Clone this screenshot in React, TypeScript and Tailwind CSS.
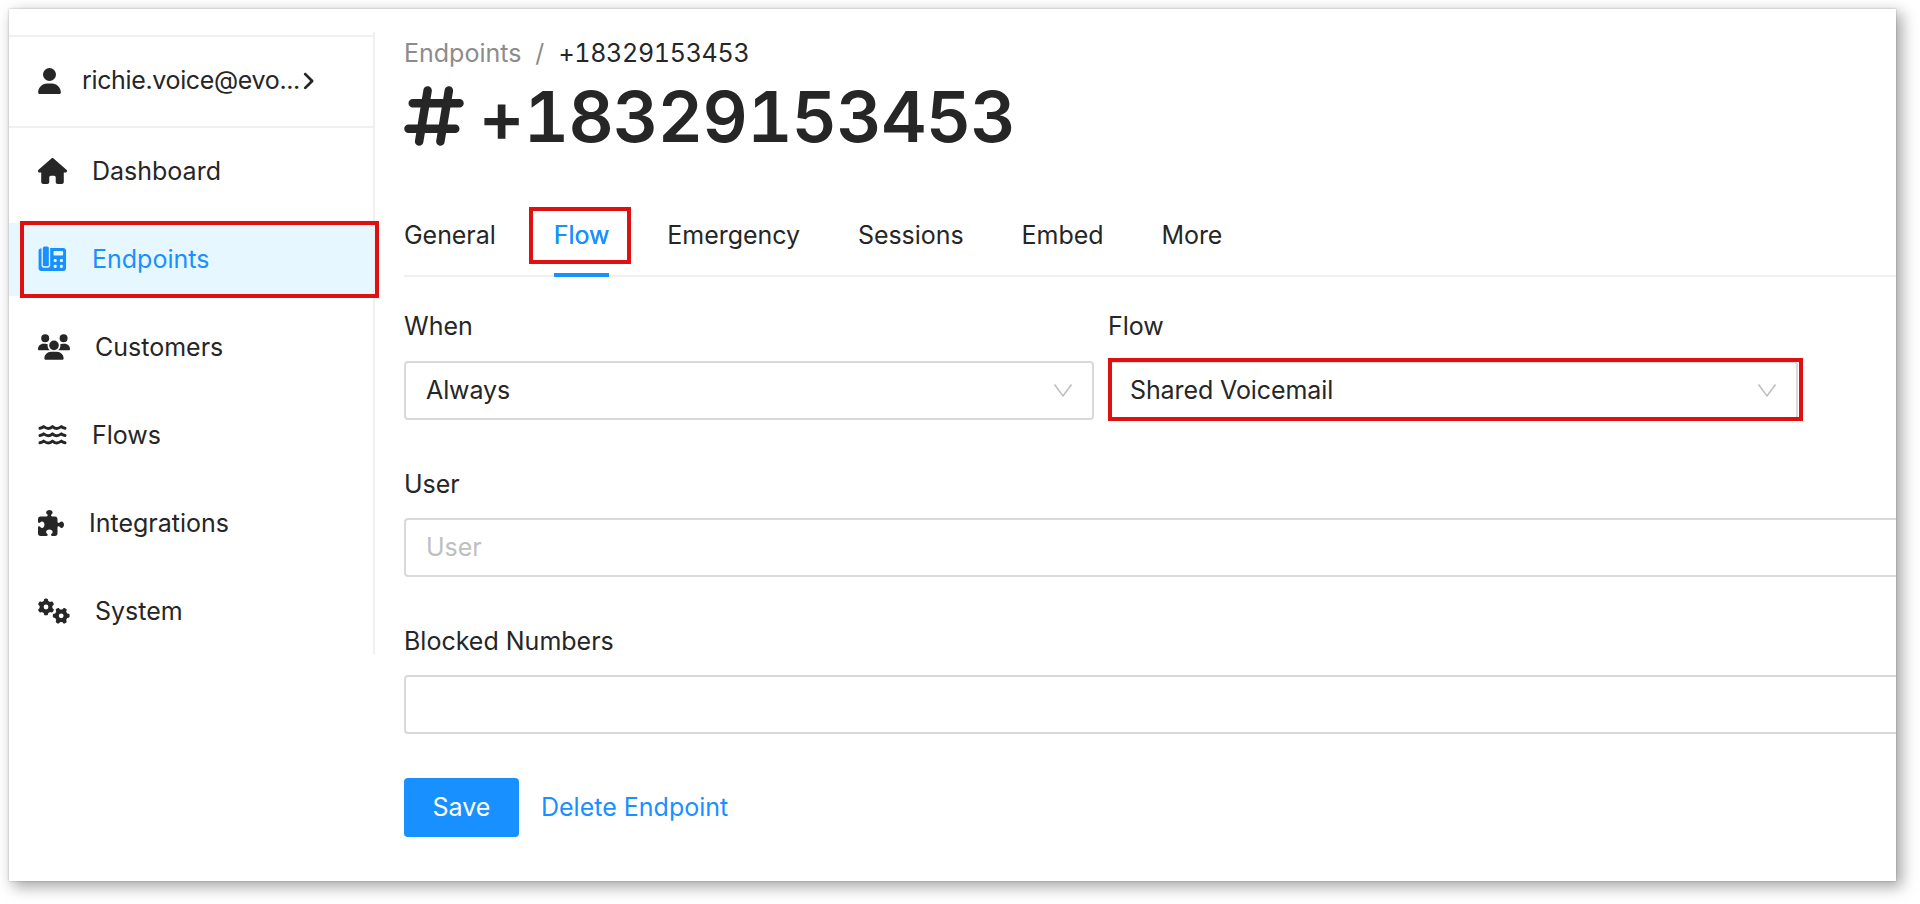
import type { ReactNode } from 'react'
import { FaUser, FaHouse, FaUsers, FaPuzzlePiece, FaGears, FaHashtag, FaAngleRight } from 'react-icons/fa6'

const BORDER = 'border-[#d9d9d9]'

function DeskPhoneIcon() {
  return (
    <svg width="29" height="26" viewBox="0 0 30 26" fill="currentColor">
      <path d="M3.6 2v17.4c0 1.500 1.100 2.600 2.600 2.600h3.800c1.500 0 2.600-1.100 2.600-2.600V1.500h13.600c1.600 0 2.800 1.200 2.800 2.800v18.300c0 1.600-1.200 2.800-2.800 2.800H3.400c-1.600 0-2.800-1.200-2.800-2.800V4.600c0-1.500 1.300-2.600 3-2.600z" />
      <rect x="5" y="0" width="6.200" height="20.500" rx="1.600" />
      <g fill="#e6f7ff">
        <rect x="16" y="4.800" width="10" height="4.600" rx="1" />
        <rect x="16.200" y="13" width="3.200" height="3.200" rx="1.200" />
        <rect x="22.600" y="13" width="3.200" height="3.200" rx="1.200" />
        <rect x="16.200" y="19" width="3.200" height="3.200" rx="1.200" />
        <rect x="22.600" y="19" width="3.200" height="3.200" rx="1.200" />
      </g>
    </svg>
  )
}

function WavesIcon() {
  return (
    <svg width="29" height="26" viewBox="0 0 30 26" fill="none" stroke="currentColor" strokeWidth="3" strokeLinecap="round" strokeLinejoin="round">
      <path d="M2 6q2.400-.3 3.900-1.700q2.800 1.900 4.600 1.900q2.200 0 4.500-1.900q2.300 1.900 4.500 1.900q1.800 0 4.600-1.900q1.500 1.400 3.900 1.700" />
      <path d="M2 13.500q2.400-.3 3.900-1.700q2.800 1.900 4.600 1.900q2.200 0 4.500-1.900q2.300 1.900 4.500 1.900q1.800 0 4.600-1.900q1.500 1.400 3.900 1.700" />
      <path d="M2 21q2.400-.3 3.900-1.700q2.800 1.900 4.600 1.900q2.200 0 4.500-1.900q2.300 1.900 4.500 1.900q1.800 0 4.600-1.900q1.500 1.400 3.900 1.700" />
    </svg>
  )
}

function ChevronDown() {
  return (
    <svg width="20" height="16" viewBox="0 0 20 16" fill="none" stroke="#bfbfbf" strokeWidth="1.600">
      <path d="M1.500 1.500L10 13L18.500 1.500" />
    </svg>
  )
}

interface NavItem {
  label: string
  icon: ReactNode
  active?: boolean
}

const navItems: NavItem[] = [
  { label: 'Dashboard', icon: <FaHouse className="h-[26px] w-[29px]" /> },
  { label: 'Endpoints', icon: <DeskPhoneIcon />, active: true },
  { label: 'Customers', icon: <FaUsers className="h-[26px] w-8" /> },
  { label: 'Flows', icon: <WavesIcon /> },
  { label: 'Integrations', icon: <FaPuzzlePiece className="size-[26px]" /> },
  { label: 'System', icon: <FaGears className="h-[26px] w-8" /> },
]

const tabs = ['General', 'Flow', 'Emergency', 'Sessions', 'Embed', 'More']

function Sidebar() {
  return (
    <aside className="mt-[23px] h-[622px] w-[366px] flex-shrink-0 border-r-2 border-[#f0f0f0]">
      <div className="mt-[3px] flex h-[93px] items-center border-y-2 border-[#f0f0f0] pb-[2px] pl-[29px]">
        <FaUser className="h-[26px] w-[23px]" />
        <span className="ml-[21px] tracking-[-0.35px]">richie.voice@evo...</span>
        <FaAngleRight className="-ml-[3px] size-[22px]" />
      </div>
      <nav className="flex flex-col gap-[15px] pt-[7px]">
        {navItems.map(item => (
          <div
            key={item.label}
            className={`relative flex h-[73px] items-center gap-[25px] pl-[29px] ${item.active ? 'bg-[#e6f7ff] text-[#1890ff]' : ''}`}
          >
            <span className="pb-[2px]">{item.icon}</span>
            <span>{item.label}</span>
            {/* Callout */}
            {item.active && (
              <div className="absolute -top-[2px] left-[11px] h-[77px] w-[359px] border-4 border-[#e01010]" />
            )}
          </div>
        ))}
      </nav>
    </aside>
  )
}

function Tabs() {
  return (
    <div className="mt-[30px] flex h-[87px] gap-[58px] border-b-2 border-[#f0f0f0] tracking-[-0.05px]">
      {tabs.map(tab => {
        const active = tab === 'Flow'
        return (
          <div
            key={tab}
            className={`relative -mb-[2px] flex h-[87px] items-center pt-[4px] ${active ? 'text-[#1890ff] [text-shadow:0_0_0.5px_currentColor]' : ''}`}
          >
            {tab}
            {active && (
              <>
                <div className="absolute inset-x-0 bottom-0 h-1 bg-[#1890ff]" />
                <div className="absolute top-[17px] -right-[22px] -left-[25px] h-[57px] border-4 border-[#e01010]" />
              </>
            )}
          </div>
        )
      })}
    </div>
  )
}

function Select({ label, value, highlighted }: { label: string; value: string; highlighted?: boolean }) {
  return (
    <div className="w-[690px]">
      <p className="h-[50px] leading-[31px]">{label}</p>
      <div className={`relative flex h-[59px] items-center justify-between rounded-[4px] border-2 pr-[19px] pl-5 ${BORDER}`}>
        <span className="tracking-[-0.1px]">{value}</span>
        <ChevronDown />
        {highlighted && <div className="absolute -top-[5px] -left-[2px] h-[63px] w-[695px] border-4 border-[#e01010]" />}
      </div>
    </div>
  )
}

function TextField({ label, placeholder }: { label: string; placeholder?: string }) {
  return (
    <div className="mt-[48px]">
      <p className="h-[50px] leading-[32px]">{label}</p>
      <div className={`flex h-[59px] items-center rounded-l-[4px] border-2 border-r-0 pl-5 text-[#bfbfbf] ${BORDER}`}>
        {placeholder}
      </div>
    </div>
  )
}

export default function App() {
  return (
    <div className="h-[904px] w-[1920px] overflow-hidden bg-white pt-[9px] pl-[9px] font-[Inter,sans-serif] text-[25px] text-[#262626] [font-feature-settings:'calt'_0]">
      <div className="flex h-[872px] w-[1887px] bg-white shadow-[5px_5px_14px_1px_rgba(0,0,0,0.35),0_0_2px_rgba(0,0,0,0.25)]">
        <Sidebar />
        <main className="min-w-0 flex-1 pt-[29px] pl-[29px]">
          <div className="flex h-[32px] items-center gap-[14px]">
            <span className="text-[#8c8c8c]">Endpoints</span>
            <span className="text-[#8c8c8c]">/</span>
            <span className="tracking-[-0.3px] tabular-nums">+18329153453</span>
          </div>
          <h1 className="mt-[2px] flex h-[88px] items-center gap-[15px] text-[70px] font-semibold">
            <FaHashtag className="h-[68px] w-[60px]" />
            <span className="tracking-[-0.6px] tabular-nums">+18329153453</span>
          </h1>
          <Tabs />
          <div className="mt-[34px] flex gap-[14px]">
            <Select label="When" value="Always" />
            <Select label="Flow" value="Shared Voicemail" highlighted />
          </div>
          <TextField label="User" placeholder="User" />
          <TextField label="Blocked Numbers" />
          <div className="mt-[44px] flex items-center">
            <button className="h-[59px] w-[115px] rounded-[4px] bg-[#1890ff] text-white">Save</button>
            <button className="ml-[22px] text-[#1890ff]">Delete Endpoint</button>
          </div>
        </main>
      </div>
    </div>
  )
}
